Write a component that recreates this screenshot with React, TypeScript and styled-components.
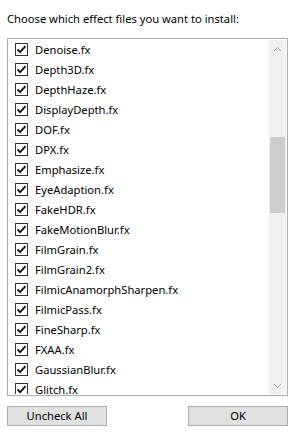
import styled, { createGlobalStyle } from "styled-components"

const Global = createGlobalStyle`
  html, body { margin: 0; padding: 0; background: #fff; }
  body { font-family: "Noto Sans", "Open Sans", sans-serif; font-size: 11.2px; color: #000; }
`

const effects = [
  "Denoise.fx",
  "Depth3D.fx",
  "DepthHaze.fx",
  "DisplayDepth.fx",
  "DOF.fx",
  "DPX.fx",
  "Emphasize.fx",
  "EyeAdaption.fx",
  "FakeHDR.fx",
  "FakeMotionBlur.fx",
  "FilmGrain.fx",
  "FilmGrain2.fx",
  "FilmicAnamorphSharpen.fx",
  "FilmicPass.fx",
  "FineSharp.fx",
  "FXAA.fx",
  "GaussianBlur.fx",
  "Glitch.fx",
]

const Window = styled.div`
  width: 296px;
  height: 435px;
  box-sizing: border-box;
  padding: 11px 8px 0 7px;
  display: flex;
  flex-direction: column;
`
const Title = styled.div`
  height: 16px;
  line-height: 16px;
  margin-bottom: 11px;
  white-space: nowrap;
`
const ListBox = styled.div`
  height: 358px;
  box-sizing: border-box;
  border: 1px solid #abadb3;
  padding: 1px;
  display: flex;
  overflow: hidden;
`
const Items = styled.div`
  flex: 1;
  overflow: hidden;
`
const Row = styled.label`
  display: flex;
  align-items: flex-start;
  height: 20px;
  box-sizing: border-box;
  padding: 3px 0 0 6px;
  gap: 7px;
  white-space: nowrap;
`
const Box = styled.span`
  width: 13px;
  height: 13px;
  box-sizing: border-box;
  border: 1px solid #333;
  background: #fff;
  display: flex;
  align-items: center;
  justify-content: center;
  flex: none;
`
const RowText = styled.span`
  line-height: 13px;
`
const ScrollBar = styled.div`
  width: 17px;
  background: #f0f0f0;
  display: flex;
  flex-direction: column;
`
const Arrow = styled.div`
  height: 17px;
  display: flex;
  align-items: center;
  justify-content: center;
  flex: none;
`
const Track = styled.div`
  flex: 1;
  display: flex;
  flex-direction: column;
`
const Thumb = styled.div<{ $offset: number; $size: number }>`
  margin: ${(p) => p.$offset}px 1px 0;
  height: ${(p) => p.$size}px;
  background: #cdcdcd;
`
const Buttons = styled.div`
  display: flex;
  justify-content: space-between;
  margin-top: 10px;
`
const Button = styled.button`
  width: 100px;
  height: 20px;
  box-sizing: border-box;
  border: 1px solid #adadad;
  background: #e1e1e1;
  font: inherit;
  color: #000;
  padding: 0;
  line-height: 16px;
`

function Check() {
  return (
    <svg width="11" height="11" viewBox="0 0 11 11">
      <path d="M1.5 5.5 L4.2 8.2 L9.5 2.2" fill="none" stroke="#111" strokeWidth="1.8" />
    </svg>
  )
}

function Chevron({ down }: { down?: boolean }) {
  return (
    <svg width="9" height="6" viewBox="0 0 9 6">
      <polyline
        points={down ? "1,1 4.5,4.5 8,1" : "1,5 4.5,1.5 8,5"}
        fill="none"
        stroke="#a3a3a3"
        strokeWidth="1"
      />
    </svg>
  )
}

export default function App() {
  return (
    <>
      <Global />
      <Window>
        <Title>Choose which effect files you want to install:</Title>
        <ListBox>
          <Items>
            {effects.map((name) => (
              <Row key={name}>
                <Box>
                  <Check />
                </Box>
                <RowText>{name}</RowText>
              </Row>
            ))}
          </Items>
          <ScrollBar>
            <Arrow>
              <Chevron />
            </Arrow>
            <Track>
              <Thumb $offset={80} $size={76} />
            </Track>
            <Arrow>
              <Chevron down />
            </Arrow>
          </ScrollBar>
        </ListBox>
        <Buttons>
          <Button>Uncheck All</Button>
          <Button>OK</Button>
        </Buttons>
      </Window>
    </>
  )
}
